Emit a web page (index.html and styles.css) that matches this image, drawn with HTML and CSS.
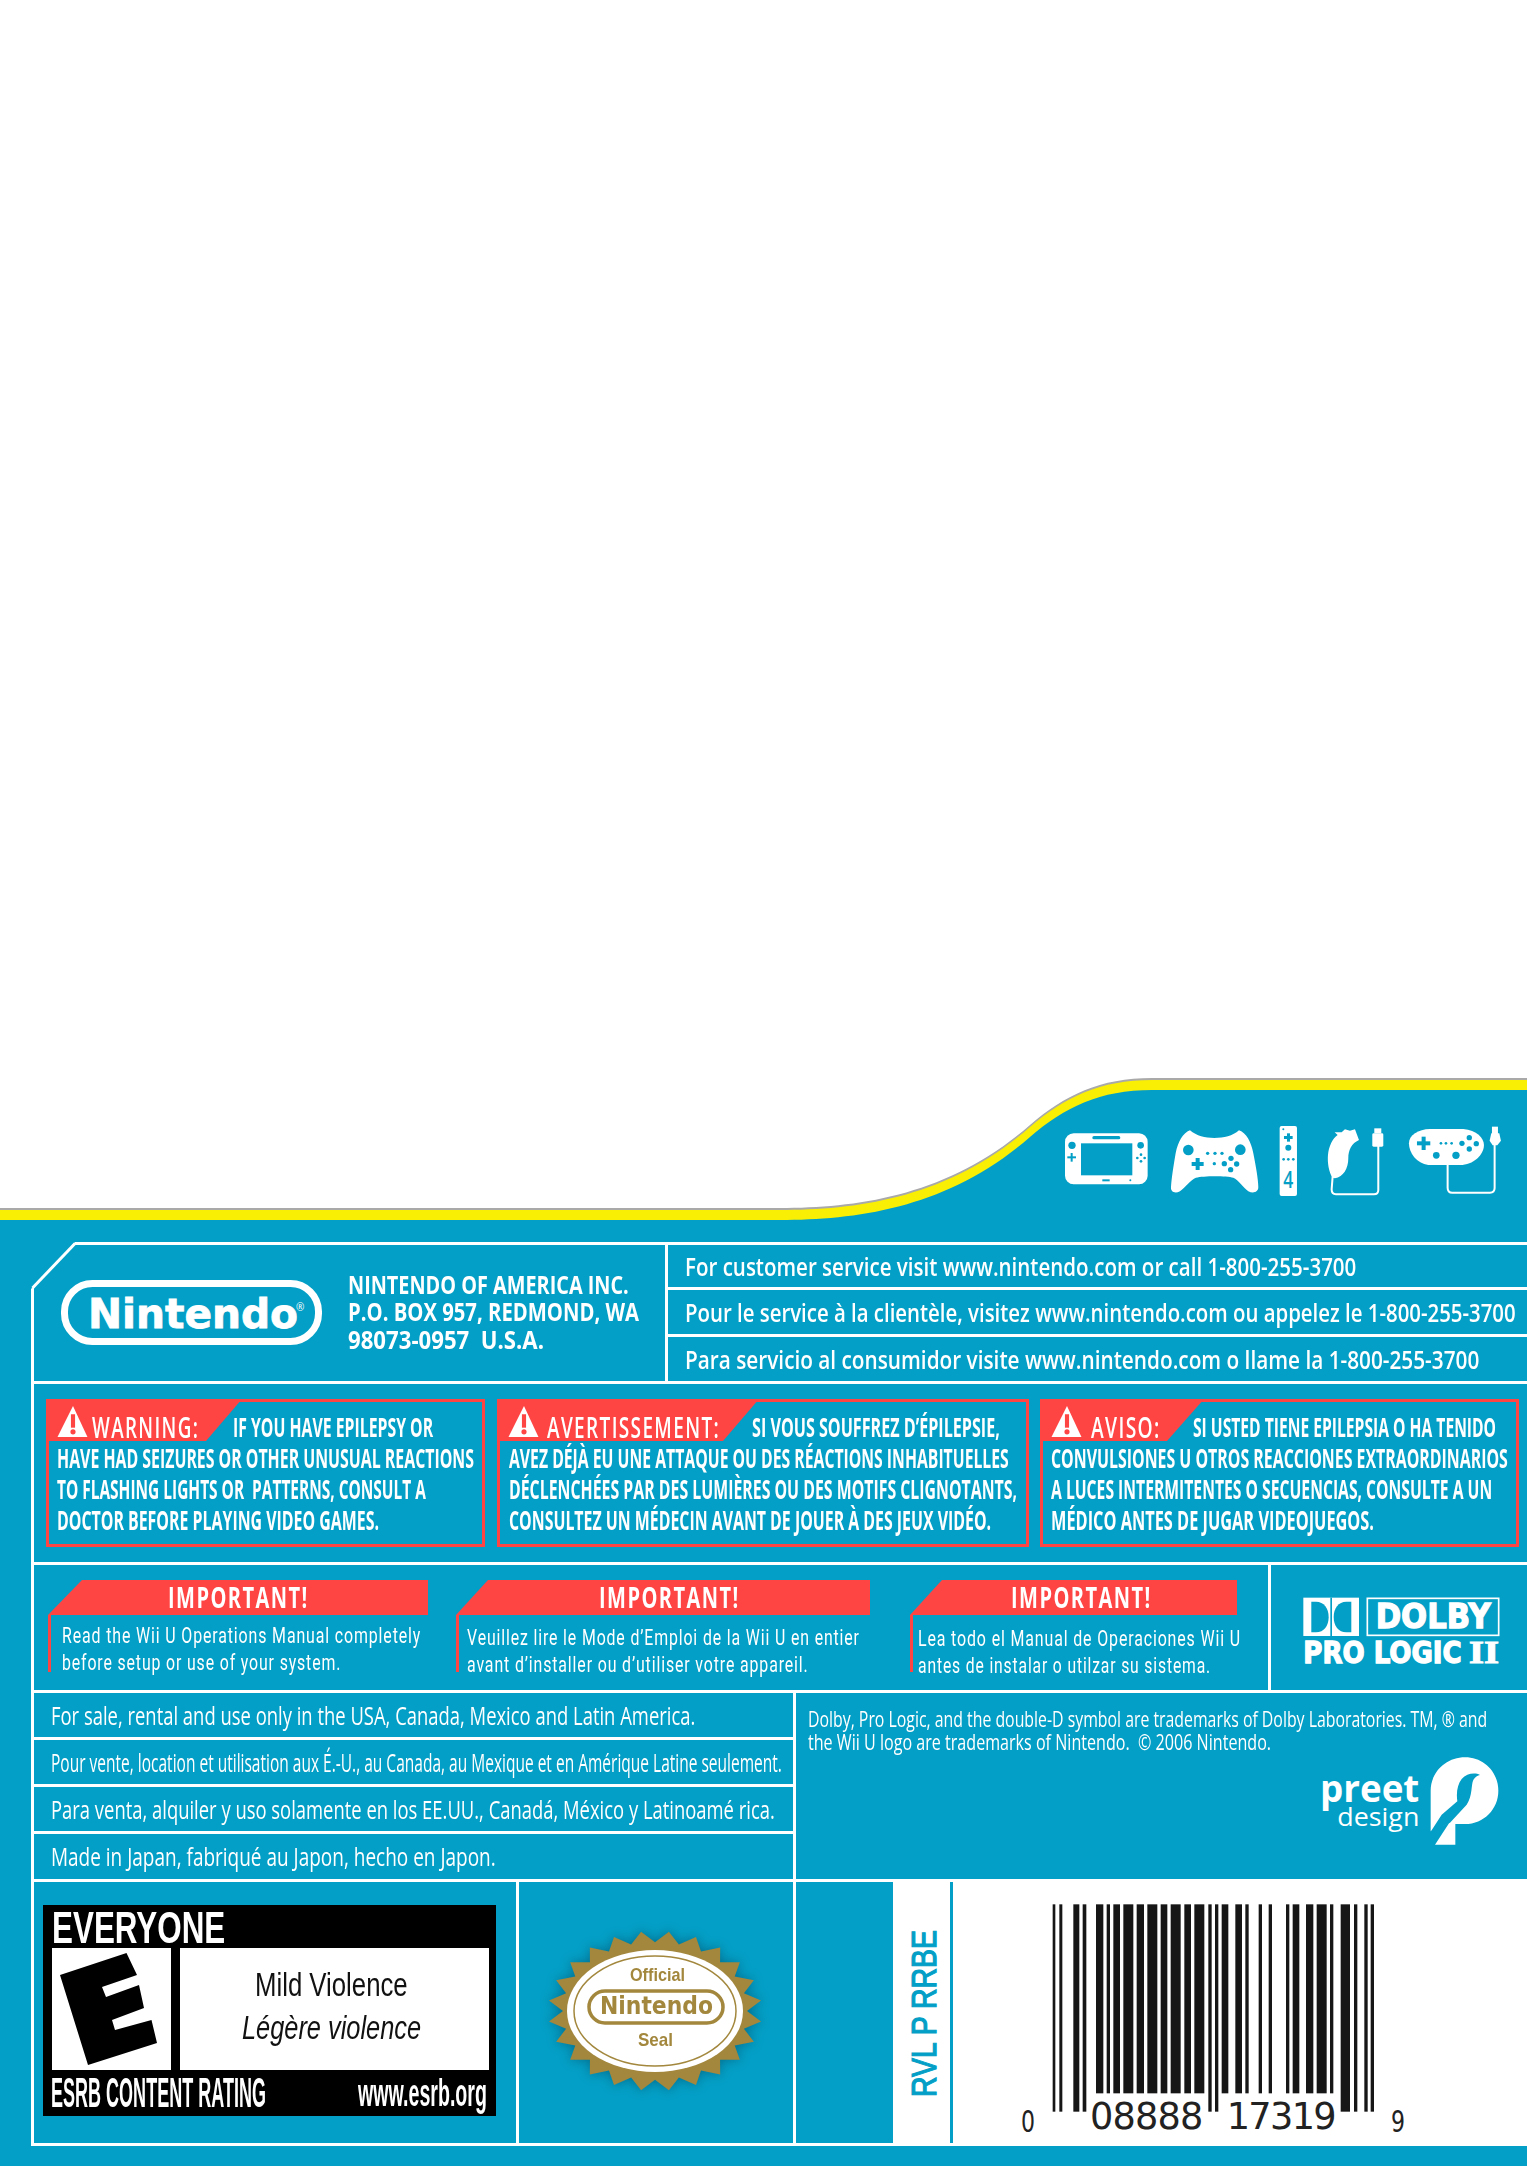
FILE: index.html
```html
<!DOCTYPE html>
<html lang="en">
  <head>
    <meta charset="utf-8" />
    <title>Wii U box back</title>
    <link rel="stylesheet" href="styles.css">
  </head>

  <body>
    <svg class="hero" viewBox="0 0 1527 1221" width="1527" height="1221">
      <defs>
        <path id="wave" d="M0 1208 L780 1208 C860 1208 950 1195 1030 1125 C1065 1095 1100 1078 1152 1078 L1527 1078 L1527 1230 L0 1230 Z"/>
      </defs>
      <use href="#wave" class="wave-gray"/>
      <use href="#wave" class="wave-yellow" transform="translate(0 2)"/>
      <use href="#wave" class="wave-blue" transform="translate(0 12)"/>

      <g transform="translate(1040 1100) scale(0.3333)">
        <!-- gamepad -->
        <rect class="ico" x="75" y="100" width="248" height="153" rx="26"/>
        <rect class="hole" x="123" y="130" width="154" height="96"/>
        <rect class="hole" x="157" y="108" width="84" height="10" rx="5"/>
        <circle class="hole" cx="96" cy="136" r="11"/>
        <circle class="hole" cx="302" cy="136" r="10"/>
        <rect class="hole" x="82" y="169" width="26" height="6"/>
        <rect class="hole" x="92" y="159" width="6" height="26"/>
        <circle class="hole" cx="303" cy="164" r="4"/>
        <circle class="hole" cx="292" cy="174" r="4"/>
        <circle class="hole" cx="314" cy="174" r="4"/>
        <circle class="hole" cx="303" cy="184" r="4"/>
        <rect class="hole" x="187" y="238" width="22" height="6"/>
        <circle class="hole" cx="271" cy="241" r="3"/>
        <!-- pro controller -->
        <path class="ico" d="M450 91 C470 108 495 114 523 114 C552 114 578 108 597 91 C620 100 633 125 640 160 C648 200 655 240 655 262 C655 276 640 282 625 274 C610 262 595 240 580 233 C560 227 490 227 468 233 C452 240 435 262 420 274 C405 282 392 276 393 262 C394 240 400 200 407 160 C414 125 428 100 450 91 Z"/>
        <circle class="hole" cx="445" cy="150" r="16"/>
        <circle class="hole" cx="601" cy="149" r="16"/>
        <rect class="hole" x="455" y="186" width="36" height="12"/>
        <rect class="hole" x="467" y="174" width="12" height="36"/>
        <circle class="hole" cx="503" cy="160" r="5"/>
        <circle class="hole" cx="525" cy="160" r="5"/>
        <circle class="hole" cx="546" cy="160" r="5"/>
        <circle class="hole" cx="523" cy="191" r="5"/>
        <circle class="hole" cx="573" cy="175" r="8"/>
        <circle class="hole" cx="553" cy="191" r="8"/>
        <circle class="hole" cx="590" cy="192" r="8"/>
        <circle class="hole" cx="572" cy="209" r="8"/>
        <!-- remote -->
        <rect class="ico" x="719" y="78" width="52" height="210" rx="6"/>
        <circle class="hole" cx="730" cy="88" r="3"/>
        <rect class="hole" x="732" y="108" width="26" height="9"/>
        <rect class="hole" x="741" y="100" width="9" height="25"/>
        <circle class="hole" cx="745" cy="143" r="9"/>
        <circle class="hole" cx="731" cy="178" r="4"/>
        <circle class="hole" cx="745" cy="178" r="4"/>
        <circle class="hole" cx="760" cy="178" r="4"/>
        <text class="remote-num" x="745" y="264" text-anchor="middle" textLength="30" lengthAdjust="spacingAndGlyphs">4</text>
        <!-- nunchuk -->
        <path class="ico" d="M884 97 L905 97 L915 88 L930 92 L945 88 L957 120 C935 130 925 150 925 175 C925 205 910 232 885 235 L877 233 C867 215 862 190 864 165 C866 140 878 115 893 105 Z"/>
        <path class="cable" d="M878 230 L875 268 Q875 283 888 283 L1002 283 Q1015 283 1015 270 L1015 135"/>
        <rect class="ico" x="1003" y="85" width="21" height="15"/>
        <rect class="ico" x="997" y="100" width="33" height="40" rx="4"/>
        <!-- classic controller -->
        <path class="ico" d="M1170 87 L1270 87 C1310 90 1332 115 1332 135 C1332 165 1300 195 1260 195 L1165 195 C1130 190 1107 160 1107 130 C1107 105 1135 88 1170 87 Z"/>
        <rect class="hole" x="1131" y="124" width="40" height="12"/>
        <rect class="hole" x="1145" y="110" width="12" height="40"/>
        <circle class="hole" cx="1203" cy="130" r="4"/>
        <circle class="hole" cx="1218" cy="130" r="4"/>
        <circle class="hole" cx="1235" cy="130" r="4"/>
        <circle class="hole" cx="1266" cy="130" r="8"/>
        <circle class="hole" cx="1288" cy="113" r="8"/>
        <circle class="hole" cx="1309" cy="131" r="8"/>
        <circle class="hole" cx="1288" cy="147" r="8"/>
        <circle class="hole" cx="1189" cy="166" r="10"/>
        <circle class="hole" cx="1248" cy="166" r="11"/>
        <path class="cable" d="M1223 195 L1223 263 Q1223 278 1237 278 L1350 278 Q1364 278 1364 264 L1364 130"/>
        <rect class="ico" x="1356" y="80" width="18" height="22"/>
        <path class="ico" d="M1354 100 L1378 100 L1383 122 L1372 136 L1358 136 L1349 122 Z"/>
      </g>
    </svg>

    <main class="frame">
      <svg class="corner" width="46" height="50" viewBox="0 0 46 50">
        <polygon class="hole" points="0,0 44,0 0,47"/>
        <line x1="44" y1="1.5" x2="1.5" y2="46" stroke="#fff" stroke-width="3"/>
      </svg>

      <section class="row row-head">
        <div class="maker">
          <svg class="nintendo" width="262" height="66" viewBox="0 0 262 66">
            <rect x="3.5" y="3.5" width="254" height="58" rx="28" fill="none" stroke="#fff" stroke-width="7"/>
            <text class="logo-word" x="27" y="48" textLength="210" lengthAdjust="spacingAndGlyphs">Nintendo</text>
            <text class="logo-reg" x="235" y="31">®</text>
          </svg>
          <address class="address">
            <span class="line"><span class="fit" data-w="281">NINTENDO OF AMERICA INC.</span></span>
            <span class="line"><span class="fit" data-w="291">P.O. BOX 957, REDMOND, WA</span></span>
            <span class="line"><span class="fit" data-w="196">98073-0957&nbsp; U.S.A.</span></span>
          </address>
        </div>
        <div class="contact">
          <div class="contact-row short"><span class="fit" data-w="671">For customer service visit www.nintendo.com or call 1-800-255-3700</span></div>
          <div class="contact-row"><span class="fit" data-w="831">Pour le service à la clientèle, visitez www.nintendo.com ou appelez le 1-800-255-3700</span></div>
          <div class="contact-row"><span class="fit" data-w="794">Para servicio al consumidor visite www.nintendo.com o llame la 1-800-255-3700</span></div>
        </div>
      </section>

      <section class="row row-warn">
        <div class="warn warn-en">
          <div class="warn-tab">
            <svg class="warn-icon" width="32" height="32" viewBox="0 0 30 31"><path class="ico" d="M15 0 L29 30 L0 30 Z"/><rect class="bang" x="13" y="8" width="4" height="13"/><circle class="bang" cx="15" cy="25" r="2.5"/></svg>
            <span class="warn-label"><span class="fit" data-w="107">WARNING:</span></span>
          </div>
          <p class="warn-text">
            <span class="line first"><span class="fit" data-w="200">IF YOU HAVE EPILEPSY OR</span></span>
            <span class="line"><span class="fit" data-w="417">HAVE HAD SEIZURES OR OTHER UNUSUAL REACTIONS</span></span>
            <span class="line"><span class="fit" data-w="369">TO FLASHING LIGHTS OR&nbsp; PATTERNS, CONSULT A</span></span>
            <span class="line"><span class="fit" data-w="322">DOCTOR BEFORE PLAYING VIDEO GAMES.</span></span>
          </p>
        </div>
        <div class="warn warn-fr">
          <div class="warn-tab">
            <svg class="warn-icon" width="32" height="32" viewBox="0 0 30 31"><path class="ico" d="M15 0 L29 30 L0 30 Z"/><rect class="bang" x="13" y="8" width="4" height="13"/><circle class="bang" cx="15" cy="25" r="2.5"/></svg>
            <span class="warn-label"><span class="fit" data-w="173">AVERTISSEMENT:</span></span>
          </div>
          <p class="warn-text">
            <span class="line first"><span class="fit" data-w="248">SI VOUS SOUFFREZ D’ÉPILEPSIE,</span></span>
            <span class="line"><span class="fit" data-w="500">AVEZ DÉJÀ EU UNE ATTAQUE OU DES RÉACTIONS INHABITUELLES</span></span>
            <span class="line"><span class="fit" data-w="508">DÉCLENCHÉES PAR DES LUMIÈRES OU DES MOTIFS CLIGNOTANTS,</span></span>
            <span class="line"><span class="fit" data-w="482">CONSULTEZ UN MÉDECIN AVANT DE JOUER À DES JEUX VIDÉO.</span></span>
          </p>
        </div>
        <div class="warn warn-es">
          <div class="warn-tab">
            <svg class="warn-icon" width="32" height="32" viewBox="0 0 30 31"><path class="ico" d="M15 0 L29 30 L0 30 Z"/><rect class="bang" x="13" y="8" width="4" height="13"/><circle class="bang" cx="15" cy="25" r="2.5"/></svg>
            <span class="warn-label"><span class="fit" data-w="70">AVISO:</span></span>
          </div>
          <p class="warn-text">
            <span class="line first"><span class="fit" data-w="303">SI USTED TIENE EPILEPSIA O HA TENIDO</span></span>
            <span class="line"><span class="fit" data-w="457">CONVULSIONES U OTROS REACCIONES EXTRAORDINARIOS</span></span>
            <span class="line"><span class="fit" data-w="441">A LUCES INTERMITENTES O SECUENCIAS, CONSULTE A UN</span></span>
            <span class="line"><span class="fit" data-w="323">MÉDICO ANTES DE JUGAR VIDEOJUEGOS.</span></span>
          </p>
        </div>
      </section>

      <section class="row row-notice">
        <div class="notices">
          <div class="notice notice-en">
            <h2 class="notice-head"><span class="fit" data-w="141">IMPORTANT!</span></h2>
            <p class="notice-body">
              <span class="line"><span class="fit" data-w="359">Read the Wii U Operations Manual completely</span></span>
              <span class="line"><span class="fit" data-w="279">before setup or use of your system.</span></span>
            </p>
          </div>
          <div class="notice notice-fr">
            <h2 class="notice-head"><span class="fit" data-w="141">IMPORTANT!</span></h2>
            <p class="notice-body">
              <span class="line"><span class="fit" data-w="393">Veuillez lire le Mode d’Emploi de la Wii U en entier</span></span>
              <span class="line"><span class="fit" data-w="342">avant d’installer ou d’utiliser votre appareil.</span></span>
            </p>
          </div>
          <div class="notice notice-es">
            <h2 class="notice-head"><span class="fit" data-w="141">IMPORTANT!</span></h2>
            <p class="notice-body">
              <span class="line"><span class="fit" data-w="323">Lea todo el Manual de Operaciones Wii U</span></span>
              <span class="line"><span class="fit" data-w="293">antes de instalar o utilzar su sistema.</span></span>
            </p>
          </div>
        </div>
        <div class="dolby">
          <svg width="220" height="90" viewBox="0 0 660 270">
            <rect class="ico" x="28" y="38" width="167" height="115"/>
            <path class="hole" d="M52 50 L66 50 C90 50 104 70 104 96 C104 122 90 142 66 142 L52 142 Z"/>
            <path class="hole" d="M172 50 L157 50 C133 50 119 70 119 96 C119 122 133 142 157 142 L172 142 Z"/>
            <rect class="hole" x="109" y="38" width="5" height="115"/>
            <rect x="220" y="40" width="394" height="111" fill="none" stroke="#fff" stroke-width="5"/>
            <text class="dolby-word" x="245" y="130" textLength="345" lengthAdjust="spacingAndGlyphs">DOLBY</text>
            <text class="dolby-sub" x="28" y="234" textLength="475" lengthAdjust="spacingAndGlyphs">PRO LOGIC</text>
            <text class="dolby-two" x="525" y="234" textLength="90" lengthAdjust="spacingAndGlyphs">II</text>
          </svg>
        </div>
      </section>

      <section class="row row-legal">
        <div class="sale">
          <div class="sale-row"><span class="fit" data-w="644">For sale, rental and use only in the USA, Canada, Mexico and Latin America.</span></div>
          <div class="sale-row"><span class="fit" data-w="731">Pour vente, location et utilisation aux É.-U., au Canada, au Mexique et en Amérique Latine seulement.</span></div>
          <div class="sale-row"><span class="fit" data-w="724">Para venta, alquiler y uso solamente en los EE.UU., Canadá, México y Latinoamé rica.</span></div>
          <div class="sale-row"><span class="fit" data-w="445">Made in Japan, fabriqué au Japon, hecho en Japon.</span></div>
        </div>
        <div class="trademarks">
          <p class="trademarks-text">
            <span class="line"><span class="fit" data-w="679">Dolby, Pro Logic, and the double-D symbol are trademarks of Dolby Laboratories. TM, ® and</span></span>
            <span class="line"><span class="fit" data-w="463">the Wii U logo are trademarks of Nintendo.&nbsp; © 2006 Nintendo.</span></span>
          </p>
          <svg class="preet" width="200" height="110" viewBox="0 0 600 330">
            <text class="preet-word" x="30" y="175" textLength="298" lengthAdjust="spacingAndGlyphs">preet</text>
            <text class="preet-sub" x="82" y="245" textLength="246" lengthAdjust="spacingAndGlyphs">design</text>
            <path class="ico" d="M362 262 L362 140 C362 85 408 40 465 40 C522 40 565 85 565 140 C565 195 522 240 465 240 L436 240 L436 302 L375 302 L418 236 Z"/>
            <path class="hole" d="M510 93 C495 85 470 88 455 105 C443 120 438 145 442 172 L395 212 L360 266 L420 236 L470 182 C488 155 483 122 490 108 C495 98 503 95 510 93 Z"/>
          </svg>
        </div>
      </section>

      <section class="row row-foot">
        <div class="rating-cell">
          <div class="esrb">
            <div class="esrb-top"><span class="fit" data-w="173">EVERYONE</span></div>
            <div class="esrb-mid">
              <div class="esrb-letter">
                <svg width="119" height="122" viewBox="0 0 119 122"><polygon points="8,27 74.5,5 85,27 50,39 54,49 87,37 92,60 60,72 63,82 99.5,72 105,95 36,117"/></svg>
              </div>
              <div class="esrb-desc">
                <span class="line"><span class="fit" data-w="153">Mild Violence</span></span>
                <span class="line italic"><span class="fit" data-w="179">Légère violence</span></span>
              </div>
            </div>
            <div class="esrb-bottom">
              <span class="fit" data-w="215">ESRB CONTENT RATING</span>
              <span class="esrb-url"><span class="fit" data-w="129">www.esrb.org</span></span>
            </div>
          </div>
        </div>
        <div class="seal-cell">
          <svg class="seal" width="230" height="190" viewBox="-115 -92 230 190">
            <polygon class="seal-gold" transform="scale(1.07 .8)" points="86,0 99.1,13 83.1,22.3 92.4,38.3 74.5,43 79.3,60.9 60.8,60.8 60.9,79.3 43,74.5 38.3,92.4 22.3,83.1 13,99.1 0,86 -13,99.1 -22.3,83.1 -38.3,92.4 -43,74.5 -60.9,79.3 -60.8,60.8 -79.3,60.9 -74.5,43 -92.4,38.3 -83.1,22.3 -99.1,13 -86,0 -99.1,-13 -83.1,-22.3 -92.4,-38.3 -74.5,-43 -79.3,-60.9 -60.8,-60.8 -60.9,-79.3 -43,-74.5 -38.3,-92.4 -22.3,-83.1 -13,-99.1 0,-86 13,-99.1 22.3,-83.1 38.3,-92.4 43,-74.5 60.9,-79.3 60.8,-60.8 79.3,-60.9 74.5,-43 92.4,-38.3 83.1,-22.3 99.1,-13"/>
            <ellipse cx="0" cy="0" rx="88" ry="61" fill="#fff"/>
            <ellipse class="seal-line" cx="0" cy="0" rx="81" ry="55" stroke-width="1.5"/>
            <rect class="seal-line" x="-66" y="-20" width="134" height="32" rx="16" stroke-width="3.5"/>
            <text class="seal-text" x="-25" y="-30" textLength="55" lengthAdjust="spacingAndGlyphs">Official</text>
            <text class="seal-word" x="-55" y="3" textLength="113" lengthAdjust="spacingAndGlyphs">Nintendo</text>
            <text class="seal-text" x="-17" y="35" textLength="35" lengthAdjust="spacingAndGlyphs">Seal</text>
          </svg>
        </div>
        <div class="code-gap"></div>
        <div class="code-cell">
          <div class="code-label">
            <svg width="57" height="261" viewBox="0 0 57 261">
              <text class="code-text" transform="translate(43 215) rotate(-90)" textLength="167" lengthAdjust="spacingAndGlyphs">RVL P RRBE</text>
            </svg>
          </div>
          <div class="barcode">
            <svg width="415" height="270" viewBox="-45 0 1245 810">
              <g class="bars-long">
                <rect x="68" y="43" width="8" height="622"/>
                <rect x="88" y="43" width="9" height="622"/>
                <rect x="130" y="43" width="18" height="622"/>
                <rect x="158" y="43" width="11" height="622"/>
                <rect x="535" y="43" width="10" height="622"/>
                <rect x="555" y="43" width="10" height="622"/>
                <rect x="932" y="43" width="28" height="622"/>
                <rect x="972" y="43" width="10" height="622"/>
                <rect x="1003" y="43" width="10" height="622"/>
                <rect x="1022" y="43" width="10" height="622"/>
              </g>
              <g class="bars-short">
                <rect x="198" y="43" width="22" height="567"/>
                <rect x="230" y="43" width="10" height="567"/>
                <rect x="250" y="43" width="20" height="567"/>
                <rect x="280" y="43" width="30" height="567"/>
                <rect x="320" y="43" width="22" height="567"/>
                <rect x="352" y="43" width="30" height="567"/>
                <rect x="392" y="43" width="20" height="567"/>
                <rect x="422" y="43" width="30" height="567"/>
                <rect x="463" y="43" width="20" height="567"/>
                <rect x="493" y="43" width="30" height="567"/>
                <rect x="575" y="43" width="20" height="567"/>
                <rect x="616" y="43" width="20" height="567"/>
                <rect x="646" y="43" width="10" height="567"/>
                <rect x="686" y="43" width="10" height="567"/>
                <rect x="716" y="43" width="10" height="567"/>
                <rect x="768" y="43" width="10" height="567"/>
                <rect x="788" y="43" width="20" height="567"/>
                <rect x="828" y="43" width="22" height="567"/>
                <rect x="860" y="43" width="30" height="567"/>
                <rect x="900" y="43" width="10" height="567"/>
              </g>
              <text class="digits-big" x="180" y="718" textLength="340">08888</text>
              <text class="digits-big" x="590" y="718" textLength="330">17319</text>
              <text class="digits-small" x="-27" y="726" textLength="42" lengthAdjust="spacingAndGlyphs">0</text>
              <text class="digits-small" x="1083" y="726" textLength="42" lengthAdjust="spacingAndGlyphs">9</text>
            </svg>
          </div>
        </div>
      </section>
    </main>

    <script src="fit.js"></script>
  </body>
</html>
```

FILE: styles.css
```css
* {
  box-sizing: border-box;
}

html, body {
  margin: 0;
  background-color: #049fc6;
  overflow: hidden;
}

body {
  width: 1527px;
  height: 2166px;
  color: #fff;
  font-family: "Open Sans", sans-serif;
}

p, h2, address {
  margin: 0;
  font-style: normal;
}

.line {
  display: block;
}

.fit {
  display: inline-block;
  white-space: nowrap;
  transform-origin: 0 50%;
}

/* top wave and controller icons */
.hero {
  display: block;
  background-color: #fff;
}

.wave-gray { fill: #a9a9a9; }
.wave-yellow { fill: #f9ef05; }
.wave-blue { fill: #049fc6; }

.ico { fill: #fff; }
.hole { fill: #049fc6; }

.cable {
  fill: none;
  stroke: #fff;
  stroke-width: 6;
}

.remote-num {
  fill: #049fc6;
  font-family: "Open Sans", sans-serif;
  font-weight: 600;
  font-size: 72px;
}

/* ruled frame */
.frame {
  position: relative;
  margin: 21px 0 0 31px;
  width: 1496px;
  border-top: 3px solid #fff;
  border-left: 3px solid #fff;
}

.corner {
  position: absolute;
  top: -3px;
  left: -3px;
}

.row {
  display: flex;
  border-bottom: 3px solid #fff;
}

/* nintendo + contact */
.row-head { height: 139px; }

.maker {
  width: 634px;
  display: flex;
  align-items: center;
  gap: 25px;
  padding: 0 0 0 27px;
  border-right: 3px solid #fff;
}

.logo-word {
  fill: #fff;
  stroke: #fff;
  stroke-width: 0.8;
  font-family: "DejaVu Sans", sans-serif;
  font-weight: 700;
  font-size: 40px;
}

.logo-reg {
  fill: #fff;
  font-family: "Open Sans", sans-serif;
  font-size: 10px;
}

.address {
  margin-top: -2px;
  font-size: 25px;
  font-weight: 700;
  line-height: 27.5px;
}

.contact {
  flex: 1;
  font-size: 26px;
  font-weight: 600;
}

.contact-row {
  height: 47px;
  padding-left: 17px;
  line-height: 44px;
  border-bottom: 3px solid #fff;
}

.contact-row.short {
  height: 45px;
  line-height: 42px;
}

.contact-row:last-child {
  height: 44px;
  border-bottom: 0;
}

/* epilepsy warnings */
.row-warn {
  height: 181px;
  padding: 15px 0 0 12px;
}

.warn {
  position: relative;
  height: 148px;
  border: 3px solid #ff4444;
  padding: 9px 0 0 8px;
}

.warn-en { width: 439px; }
.warn-fr { width: 532px; margin-left: 12px; padding-left: 9px; }
.warn-es { width: 479px; margin-left: 11px; }

.warn-tab {
  position: absolute;
  top: -3px;
  left: -3px;
  height: 42px;
  display: flex;
  align-items: flex-start;
  background-color: #ff4444;
}

.warn-en .warn-tab { width: 196px; clip-path: polygon(0 0, 100% 0, 160px 100%, 0 100%); }
.warn-fr .warn-tab { width: 262px; clip-path: polygon(0 0, 100% 0, 226px 100%, 0 100%); }
.warn-es .warn-tab { width: 164px; clip-path: polygon(0 0, 100% 0, 127px 100%, 0 100%); }

.warn-icon {
  flex: none;
  margin: 7px 0 0 11px;
}

.bang { fill: #ff4444; }

.warn-label {
  margin: 13px 0 0 3px;
  font-size: 28px;
  font-weight: 600;
  letter-spacing: 2px;
  line-height: 30px;
}

.warn-fr .warn-label { margin-left: 7px; }
.warn-es .warn-label { margin-left: 8px; }

.warn-text {
  font-size: 27.5px;
  font-weight: 700;
  line-height: 31px;
}

.warn-en .first { padding-left: 176px; }
.warn-fr .first { padding-left: 243px; }
.warn-es .first { padding-left: 142px; }

/* important notices + dolby */
.row-notice { height: 128px; }

.notices {
  width: 1237px;
  display: grid;
  grid-template-columns: 408px 454px 327px;
  padding: 15px 0 0 14px;
  border-right: 3px solid #fff;
}

.notice-head {
  height: 35px;
  background-color: #ff4444;
  text-align: center;
  font-size: 28px;
  font-weight: 700;
  line-height: 35px;
  letter-spacing: 2px;
}

.notice-en { width: 380px; }
.notice-fr { width: 414px; }
.notice-es { width: 327px; }

.notice-en .notice-head { clip-path: polygon(34px 0, 100% 0, 100% 100%, 0 100%); }
.notice-fr .notice-head { padding-left: 12px; clip-path: polygon(32px 0, 100% 0, 100% 100%, 0 100%); }
.notice-es .notice-head { padding-left: 15px; clip-path: polygon(32px 0, 100% 0, 100% 100%, 0 100%); }

.notice-body {
  height: 57px;
  border-left: 3px solid #ff4444;
  font-family: Roboto, sans-serif;
  font-size: 22px;
  letter-spacing: 1.2px;
  line-height: 27px;
  padding: 7px 0 0 11px;
}

.notice-fr .notice-body { padding: 9px 0 0 8px; }
.notice-es .notice-body { padding: 10px 0 0 5px; }

.dolby { padding: 20px 0 0 23px; }

.dolby svg { display: block; }

.dolby-word, .dolby-sub {
  fill: #fff;
  stroke: #fff;
  stroke-width: 4;
  font-family: "DejaVu Sans", sans-serif;
  font-weight: 700;
}

.dolby-word { font-size: 102px; }
.dolby-sub { font-size: 88px; }

.dolby-two {
  fill: #fff;
  stroke: #fff;
  stroke-width: 3;
  font-family: "Liberation Serif", serif;
  font-weight: 700;
  font-size: 92px;
}

/* sale regions + trademarks */
.row-legal { height: 189px; }

.sale {
  width: 762px;
  border-right: 3px solid #fff;
  font-size: 25px;
}

.sale-row {
  height: 47px;
  padding-left: 17px;
  line-height: 44px;
  border-bottom: 3px solid #fff;
}

.sale-row:last-child {
  height: 45px;
  border-bottom: 0;
}

.trademarks {
  flex: 1;
  padding: 15px 0 0 12px;
}

.trademarks-text {
  font-size: 21px;
  line-height: 23px;
}

.preet {
  display: block;
  margin: -10px 0 0 502px;
}

.preet-word, .preet-sub {
  fill: #fff;
  font-family: "Open Sans", sans-serif;
}

.preet-word { font-size: 112px; font-weight: 700; }
.preet-sub { font-size: 76px; }

/* bottom row */
.row-foot { height: 264px; }

.rating-cell {
  width: 485px;
  padding: 23px 0 0 9px;
  border-right: 3px solid #fff;
}

.esrb {
  width: 453px;
  height: 211px;
  background-color: #000;
  font-family: "Liberation Sans", sans-serif;
}

.esrb-top {
  height: 43px;
  padding: 1px 0 0 9px;
  font-size: 45px;
  font-weight: 700;
  line-height: 43px;
}

.esrb-mid {
  height: 122px;
  display: flex;
  gap: 9px;
  padding-left: 9px;
}

.esrb-letter {
  width: 119px;
  background-color: #fff;
}

.esrb-letter svg { display: block; }

.esrb-desc {
  width: 309px;
  background-color: #fff;
  color: #111;
  text-align: center;
  font-size: 34px;
  line-height: 43px;
  padding: 15px 6px 0 0;
}

.italic { font-style: italic; }

.esrb-bottom {
  height: 46px;
  display: flex;
  justify-content: space-between;
  padding: 0 9px 0 8px;
  font-size: 42px;
  font-weight: 700;
  line-height: 46px;
}

.esrb-url {
  font-size: 38px;
  font-weight: 700;
}

.seal-cell {
  width: 277px;
  display: flex;
  align-items: center;
  justify-content: center;
  padding: 2px 3px 0 0;
  border-right: 3px solid #fff;
}

.seal {
  overflow: visible;
  filter: drop-shadow(0 0 6px rgba(0, 50, 70, 0.45));
}

.seal-gold { fill: #a2873d; }

.seal-line {
  fill: none;
  stroke: #a2873d;
}

.seal-text, .seal-word {
  fill: #a2873d;
  font-family: "Liberation Sans", sans-serif;
  font-weight: 700;
  font-size: 19px;
}

.seal-word {
  font-family: "DejaVu Sans", sans-serif;
  font-size: 24px;
}

/* upc block */
.code-gap { width: 97px; }

.code-cell {
  flex: 1;
  display: flex;
  background-color: #fff;
}

.code-label {
  width: 60px;
  border-right: 3px solid #049fc6;
}

.code-label svg { display: block; }

.code-text {
  fill: #049fc6;
  stroke: #049fc6;
  stroke-width: 1.2;
  font-family: "Liberation Sans", sans-serif;
  font-size: 35px;
}

.barcode { padding: 8px 0 0 62px; }

.barcode svg { display: block; overflow: visible; }

.bars-long rect, .bars-short rect { fill: #161616; }

.digits-big, .digits-small {
  fill: #222;
  font-family: "DejaVu Sans", sans-serif;
}

.digits-big { font-size: 110px; }
.digits-small { font-size: 90px; }
```

FILE: fit.js
```js
// squeeze each line to the width it has on the printed box
document.querySelectorAll('.fit').forEach(function (el) {
  var target = Number(el.dataset.w);
  var natural = el.offsetWidth;
  el.style.transform = 'scaleX(' + (target / natural).toFixed(4) + ')';
  el.style.marginRight = (target - natural) + 'px';
});
```
